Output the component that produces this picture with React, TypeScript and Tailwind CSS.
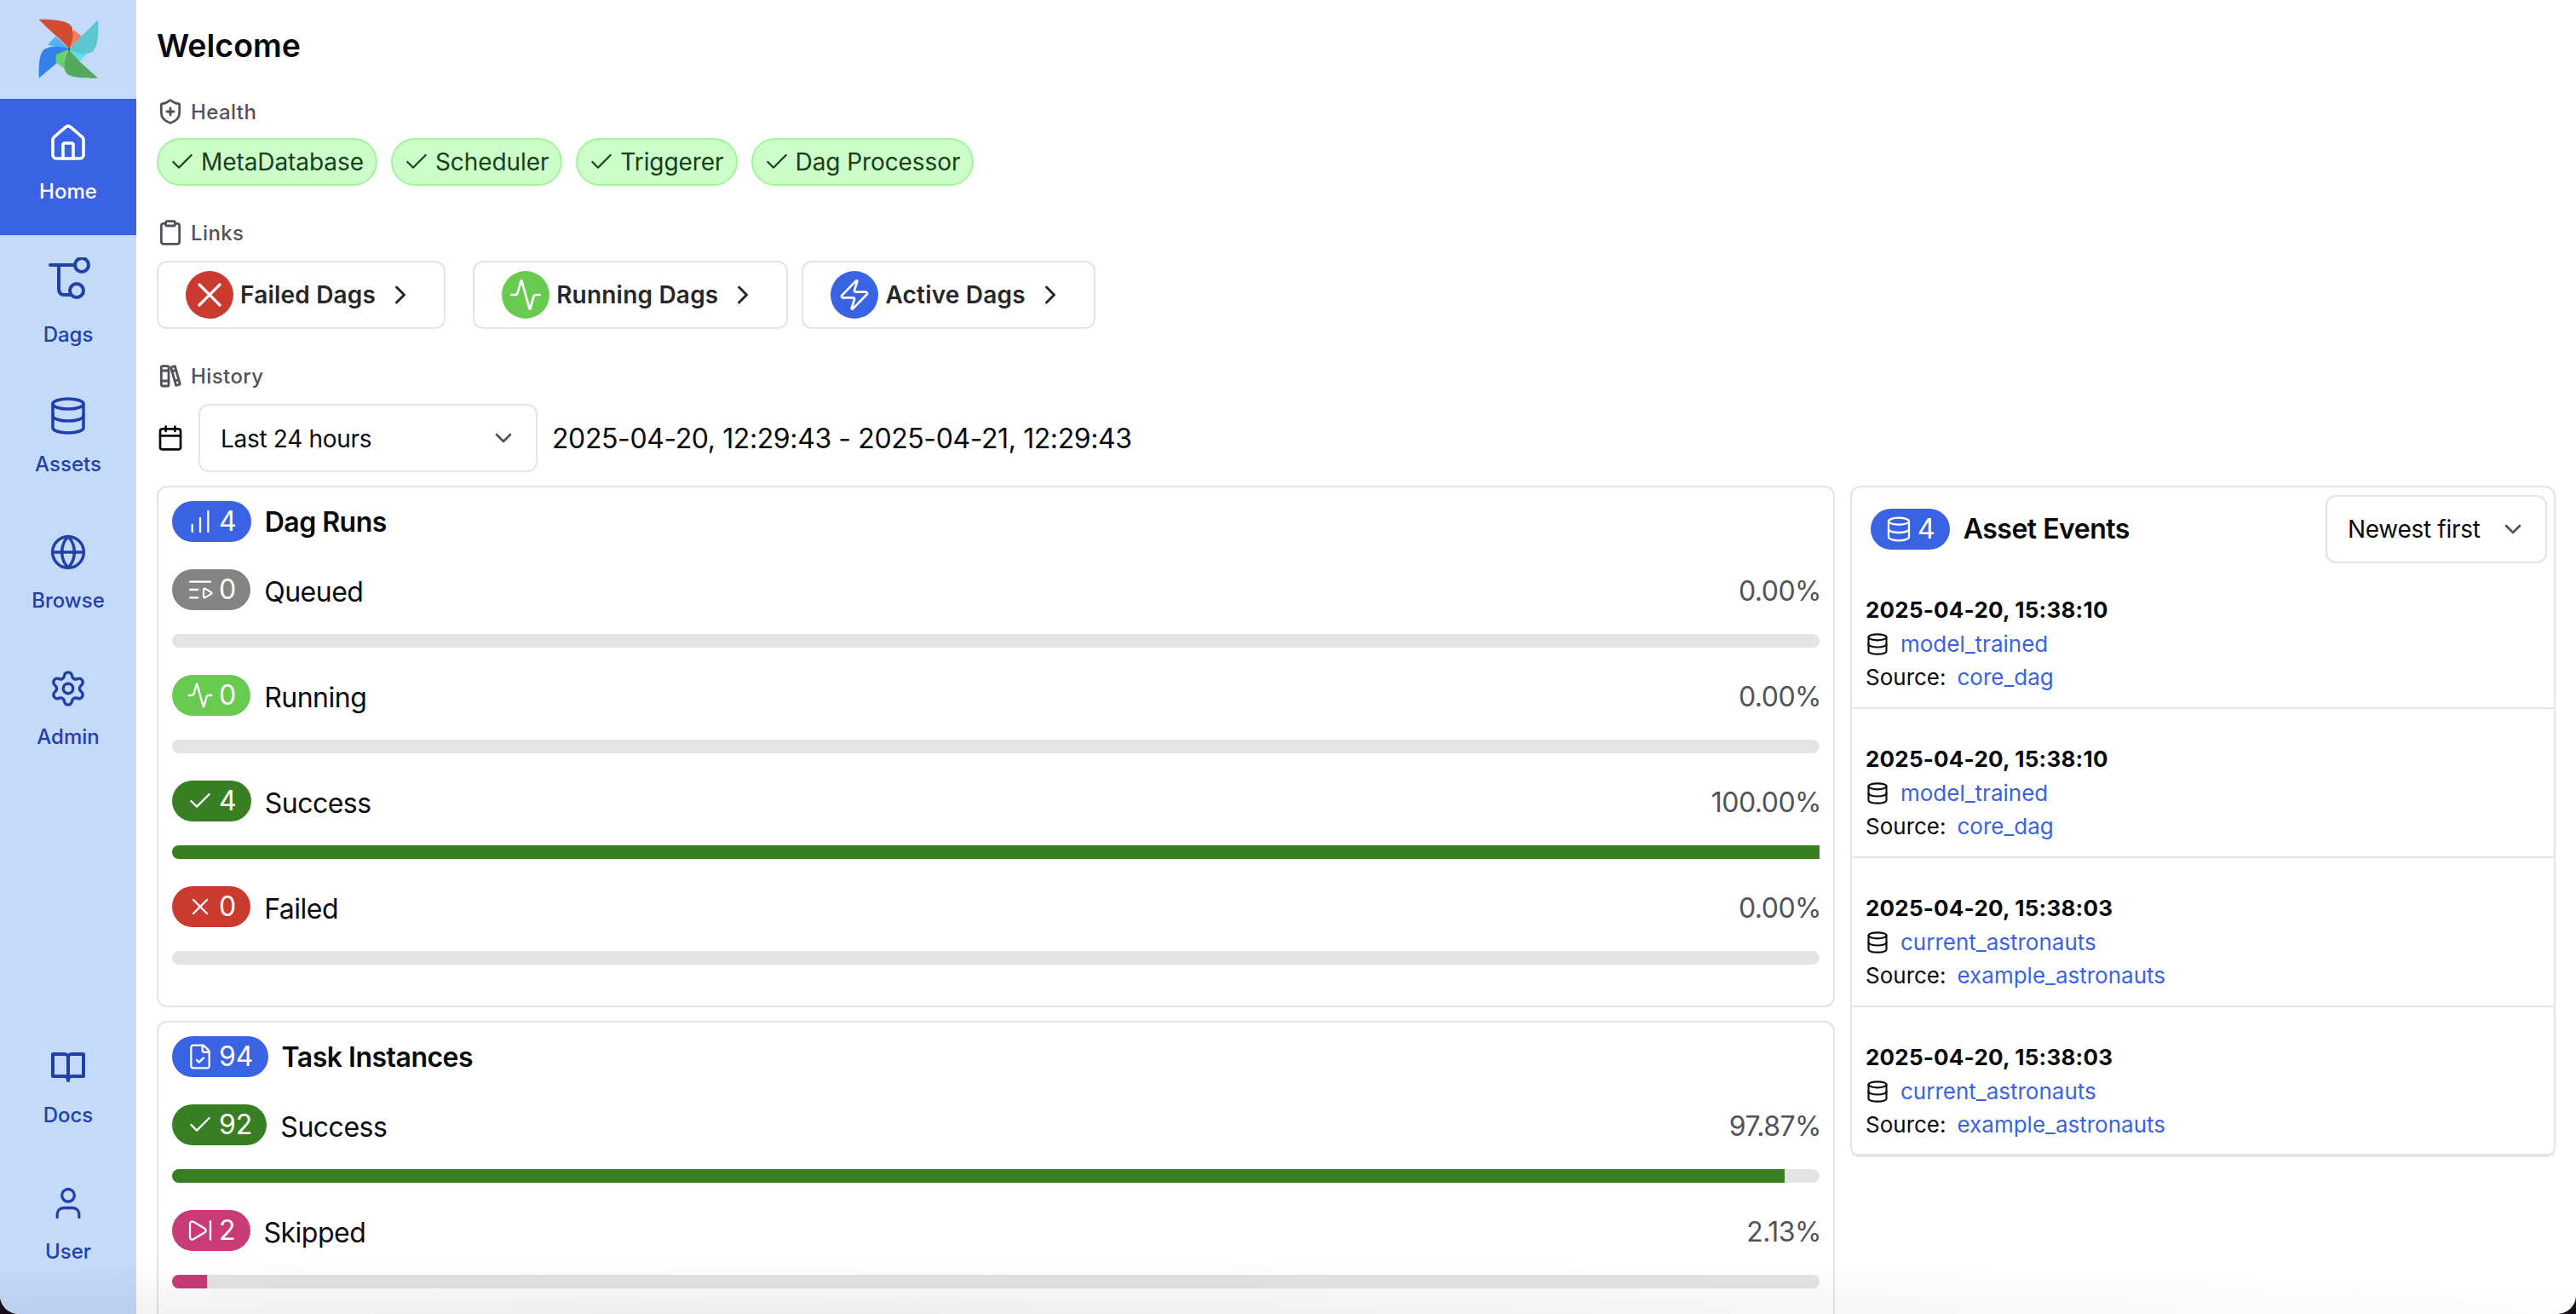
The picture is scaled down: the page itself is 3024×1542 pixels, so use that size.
import React from "react";
import {
  Activity, Calendar, ChartNoAxesColumnIncreasing, Check, ChevronDown, ChevronRight, Clipboard, Database,
  FileCheck, Globe, House, ListVideo, Settings, ShieldPlus, SkipForward, User, X, Zap,
} from "lucide-react";

type IconType = React.ComponentType<{ size?: number; strokeWidth?: number; className?: string }>;

function Logo() {
  return (
    <svg viewBox="0 0 300 270" className="absolute left-[30px] top-[10px] h-[90px] w-[100px]">
      <path d="M78 128 Q100 102 107 98 L153 142 Z" fill="#54b1f8" />
      <path d="M47 245 C47 205 46 170 60 150 C75 132 120 128 153 143 C130 160 115 185 110 192 Z" fill="#3580ea" />
      <path d="M170 75 L198 98 L153 142 Z" fill="#f08262" />
      <path d="M47 38 C95 38 150 40 163 65 C172 90 165 120 153 142 C135 115 90 85 47 38 Z" fill="#d24c30" />
      <path d="M153 143 L215 160 L190 188 Z" fill="#60e0ee" />
      <path d="M255 40 C258 90 256 130 238 150 C220 165 180 160 153 143 C170 125 190 105 198 97 Z" fill="#5cc6d2" />
      <path d="M153 143 C135 160 135 190 138 213 L107 190 Q105 165 112 160 Z" fill="#66cf6e" />
      <path d="M255 245 C200 245 155 245 142 225 C132 205 135 170 153 143 C170 165 185 180 192 188 Z" fill="#51a95b" />
      <circle cx="153" cy="143" r="3.5" fill="#2b3a4a" />
    </svg>
  );
}

function DagIcon() {
  return (
    <svg width="56" height="56" viewBox="0 0 56 56" fill="none" stroke="currentColor" strokeWidth="4" strokeLinecap="round">
      <path d="M7 9 H36" />
      <circle cx="44" cy="9" r="8" />
      <path d="M17 9 V37 Q17 44 24 44 H30" />
      <circle cx="38" cy="39" r="8" />
    </svg>
  );
}

function DocsIcon() {
  return (
    <svg width="48" height="48" viewBox="0 0 24 24" fill="none" stroke="currentColor" strokeWidth="2" strokeLinejoin="round">
      <path d="M3 4.5 H10 C11 4.5 12 5.5 12 6.5 C12 5.5 13 4.5 14 4.5 H21 V17.5 H14 C13 17.5 12 18.5 12 20 C12 18.5 11 17.5 10 17.5 H3 Z" />
      <path d="M12 6.5 V20" />
    </svg>
  );
}

function BooksIcon({ size = 32, strokeWidth = 1.6, className }: { size?: number; strokeWidth?: number; className?: string }) {
  return (
    <svg width={size} height={size} viewBox="0 0 24 24" fill="none" stroke="currentColor" strokeWidth={strokeWidth} strokeLinejoin="round" strokeLinecap="round" className={className}>
      <rect x="4" y="3.5" width="6.5" height="17.5" rx="1" />
      <path d="M4 7.5 H10.5 M4 16.5 H10.5" />
      <path d="M12.5 4.5 L16 3.5 L20.5 19.5 L17 20.5 Z" />
      <path d="M13.5 8 L17 7 M16 16.5 L19.5 15.5" />
    </svg>
  );
}

function NavItem({ icon, label, active }: { icon: React.ReactNode; label: string; active?: boolean }) {
  return (
    <div className={`flex h-[160px] flex-col items-center pt-[28px] ${active ? "bg-[#3a63e4] text-white" : "text-[#2340a8]"}`}>
      <div className="flex h-12 w-12 items-center justify-center">{icon}</div>
      <div className="mt-[13px] text-[24px] leading-[40px] font-medium">{label}</div>
    </div>
  );
}

function SectionLabel({ icon: Icon, label }: { icon: IconType; label: string }) {
  return (
    <div className="flex h-8 items-center gap-2 text-[#52525b]">
      <Icon size={32} strokeWidth={2.1} />
      <span className="pt-[2px] text-[24px] leading-8 font-medium tracking-[0.4px]">{label}</span>
    </div>
  );
}

function Chip({ label }: { label: string }) {
  return (
    <div className="flex h-14 items-center gap-[6px] rounded-full border-2 border-[#a0f59a] bg-[#cdfdc8] pl-3 pr-[14px] text-[28px] tracking-[-0.08px] text-[#14401a]">
      <Check size={32} strokeWidth={1.6} />
      <span>{label}</span>
    </div>
  );
}

function LinkBtn({ icon: Icon, bg, label, size, extra }: { icon: IconType; bg: string; label: string; size: number; extra?: string }) {
  return (
    <div className={`flex h-20 items-center gap-2 rounded-[12px] border-2 border-[#e4e4e7] pl-8 pr-[33px] ${extra ?? ""}`}>
      <div className={`flex h-14 w-14 items-center justify-center rounded-full text-white ${bg}`}>
        <Icon size={size} strokeWidth={1.6} />
      </div>
      <span className="text-[28px] font-semibold tracking-[0.2px] text-[#27272a]">{label}</span>
      <ChevronRight size={36} strokeWidth={2} className="ml-[3px] text-[#27272a]" />
    </div>
  );
}

function Pill({ icon: Icon, bg, n }: { icon: IconType; bg: string; n: number }) {
  return (
    <div className={`flex h-12 shrink-0 items-center gap-[6px] rounded-full px-[17px] text-[32px] text-white ${bg}`}>
      <Icon size={32} strokeWidth={1.7} />
      <span className="leading-none">{n}</span>
    </div>
  );
}

function StatRow({ icon, bg, fill, n, label, pct, width }: { icon: IconType; bg: string; fill: string; n: number; label: string; pct: string; width: number }) {
  return (
    <div className="mb-8">
      <div className="flex h-[76px] items-start gap-4">
        <Pill icon={icon} bg={bg} n={n} />
        <span className="text-[32px] leading-[54px] tracking-[-0.5px] text-[#09090b]">{label}</span>
        <span className="ml-auto -mr-[2px] text-[32px] leading-[52px] tracking-[-0.5px] text-[#52525b]">{pct}</span>
      </div>
      <div className="h-4 rounded-full bg-[#e4e4e7]">
        <div className={`h-4 rounded-l-full ${fill}`} style={{ width: `${width}%` }} />
      </div>
    </div>
  );
}

function CardTitle({ icon, n, title }: { icon: IconType; n: number; title: string }) {
  return (
    <div className="mb-8 flex h-12 items-center gap-4">
      <Pill icon={icon} bg="bg-[#3a63e4]" n={n} />
      <span className="pt-[2px] text-[32px] font-semibold tracking-[-0.5px] text-[#09090b]">{title}</span>
    </div>
  );
}

function EventRow({ date, name, source, first, last }: { date: string; name: string; source: string; first?: boolean; last?: boolean }) {
  return (
    <div className={`border-b-2 border-[#e4e4e7] px-4 text-[26px] ${first ? "pt-[35px]" : "pt-[39px]"} ${last ? "pb-[15px]" : "pb-[16px]"}`}>
      <div className="h-10 leading-[40px] font-bold tracking-[0.2px] text-[#09090b]">{date}</div>
      <div className="flex h-[39px] items-center gap-[13px]">
        <Database size={28} strokeWidth={1.8} className="text-[#09090b]" />
        <span className="text-[#3a63e4]">{name}</span>
      </div>
      <div className="flex h-[39px] items-center gap-[13px] text-[#09090b]">
        <span>Source:</span>
        <span className="text-[#3a63e4]">{source}</span>
      </div>
    </div>
  );
}

export default function App() {
  return (
    <div className="h-[1542px] w-[3024px] overflow-hidden bg-[#180c1c] font-[family-name:Inter,sans-serif]">
      <div className="relative flex h-[1542px] w-[3024px] overflow-hidden rounded-b-[22px] bg-white">
        <aside className="relative flex h-full w-[160px] shrink-0 flex-col bg-[#c3daf9] pb-[22px]">
          <Logo />
          <div className="h-[116px]" />
          <NavItem active label="Home" icon={<House size={48} strokeWidth={1.8} />} />
          <div className="flex h-[160px] flex-col items-center pt-[26px] text-[#2340a8]">
            <DagIcon />
            <div className="mt-[15px] text-[24px] leading-[40px] font-medium">Dags</div>
          </div>
          <NavItem label="Assets" icon={<Database size={48} strokeWidth={1.8} />} />
          <NavItem label="Browse" icon={<Globe size={44} strokeWidth={1.9} />} />
          <NavItem label="Admin" icon={<Settings size={46} strokeWidth={1.8} />} />
          <div className="flex-1" />
          <NavItem label="Docs" icon={<DocsIcon />} />
          <NavItem label="User" icon={<User size={44} strokeWidth={1.8} />} />
        </aside>

        <main className="min-w-0 flex-1 px-6">
          <h1 className="mt-[31px] text-[37.5px] leading-[45px] font-semibold text-[#09090b]">Welcome</h1>

          <div className="mt-[39px]">
            <SectionLabel icon={ShieldPlus} label="Health" />
          </div>
          <div className="mt-[15px] flex gap-4">
            <Chip label="MetaDatabase" />
            <Chip label="Scheduler" />
            <Chip label="Triggerer" />
            <Chip label="Dag Processor" />
          </div>

          <div className="mt-[39px]">
            <SectionLabel icon={Clipboard} label="Links" />
          </div>
          <div className="mt-[17px] flex gap-4">
            <LinkBtn icon={X} bg="bg-[#ca3a2f]" label="Failed Dags" size={48} extra="mr-[16px]" />
            <LinkBtn icon={Activity} bg="bg-[#68cb4f]" label="Running Dags" size={40} />
            <LinkBtn icon={Zap} bg="bg-[#3a63e4]" label="Active Dags" size={40} />
          </div>

          <div className="mt-[39px]">
            <SectionLabel icon={BooksIcon} label="History" />
          </div>
          <div className="mt-[17px] flex items-center gap-[17px]">
            <Calendar size={32} strokeWidth={2} className="text-[#09090b]" />
            <div className="flex h-20 w-[398px] items-center justify-between rounded-[12px] border-2 border-[#e4e4e7] pl-6 pr-[22px] text-[28px] tracking-[-0.3px] text-[#09090b]">
              <span className="pt-[1px]">Last 24 hours</span>
              <ChevronDown size={32} strokeWidth={2} className="text-[#52525b]" />
            </div>
            <span className="pt-[2px] text-[32px] tracking-[-0.4px] text-[#09090b]">2025-04-20, 12:29:43 - 2025-04-21, 12:29:43</span>
          </div>

          <div className="mt-4 grid grid-cols-[1970px_1fr] items-start gap-[18px]">
            <div className="flex flex-col gap-4">
              <section className="rounded-[12px] border-2 border-[#e4e4e7] p-4">
                <CardTitle icon={ChartNoAxesColumnIncreasing} n={4} title="Dag Runs" />
                <StatRow icon={ListVideo} bg="bg-[#848484]" fill="bg-[#848484]" n={0} label="Queued" pct="0.00%" width={0} />
                <StatRow icon={Activity} bg="bg-[#68cb4f]" fill="bg-[#68cb4f]" n={0} label="Running" pct="0.00%" width={0} />
                <StatRow icon={Check} bg="bg-[#387f23]" fill="bg-[#387f23]" n={4} label="Success" pct="100.00%" width={100} />
                <StatRow icon={X} bg="bg-[#ca3a2f]" fill="bg-[#ca3a2f]" n={0} label="Failed" pct="0.00%" width={0} />
              </section>
              <section className="rounded-[12px] border-2 border-[#e4e4e7] p-4">
                <CardTitle icon={FileCheck} n={94} title="Task Instances" />
                <StatRow icon={Check} bg="bg-[#387f23]" fill="bg-[#387f23]" n={92} label="Success" pct="97.87%" width={97.87} />
                <StatRow icon={SkipForward} bg="bg-[#c83b77]" fill="bg-[#c83b77]" n={2} label="Skipped" pct="2.13%" width={2.13} />
              </section>
            </div>

            <section className="rounded-[12px] border-2 border-[#e4e4e7]">
              <div className="flex items-center justify-between pl-[22px] pr-[8px] pt-[9px]">
                <div className="flex items-center gap-4">
                  <Pill icon={Database} bg="bg-[#3a63e4]" n={4} />
                  <span className="text-[32px] font-semibold tracking-[-0.5px] text-[#09090b]">Asset Events</span>
                </div>
                <div className="flex h-20 w-[260px] items-center justify-between rounded-[12px] border-2 border-[#e4e4e7] pl-6 pr-[22px] text-[28px] tracking-[-0.3px] text-[#09090b]">
                  <span>Newest first</span>
                  <ChevronDown size={32} strokeWidth={2} className="text-[#52525b]" />
                </div>
              </div>
              <EventRow first date="2025-04-20, 15:38:10" name="model_trained" source="core_dag" />
              <EventRow date="2025-04-20, 15:38:10" name="model_trained" source="core_dag" />
              <EventRow date="2025-04-20, 15:38:03" name="current_astronauts" source="example_astronauts" />
              <EventRow last date="2025-04-20, 15:38:03" name="current_astronauts" source="example_astronauts" />
            </section>
          </div>
        </main>

        <div className="pointer-events-none absolute inset-x-0 bottom-0 h-[70px] bg-[radial-gradient(ellipse_2400px_64px_at_900px_100%,rgba(0,0,0,0.07),transparent)]" />
      </div>
    </div>
  );
}
